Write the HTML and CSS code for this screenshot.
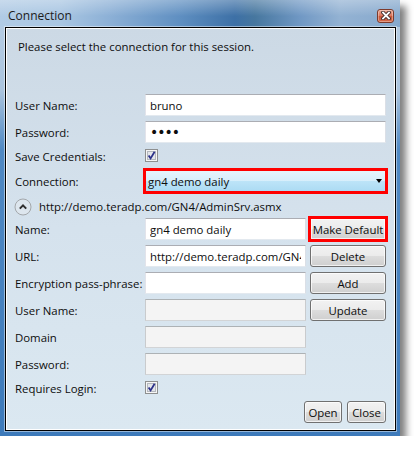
FILE: index.html
```html
<!DOCTYPE html>
<html lang="en">
	<head>
		<meta charset="UTF-8" />
		<meta name="viewport" content="width=device-width, initial-scale=1.0" />
		<title>Connection</title>
		<link rel="stylesheet" href="styles.css">
	</head>
	<body>
		<div class="window">
			<div class="titlebar">
				<span class="title">Connection</span>
				<button class="close-btn" aria-label="Close">
					<svg width="10" height="9" viewBox="0 0 10 9">
						<path d="M2 1.5 L8 7.5 M8 1.5 L2 7.5" stroke="#3b2a28" stroke-width="3.6" stroke-linecap="square" />
						<path d="M2 1.5 L8 7.5 M8 1.5 L2 7.5" stroke="#fff" stroke-width="1.8" stroke-linecap="square" />
					</svg>
				</button>
			</div>

			<div class="client">
				<p class="intro">Please select the connection for this session.</p>

				<div class="form form-top">
					<label for="userName">User Name:</label>
					<input class="field" type="text" id="userName" value="bruno" />

					<label for="password">Password:</label>
					<input class="field field-pass" type="password" id="password" value="abcd" />

					<label>Save Credentials:</label>
					<span class="check">
						<svg width="13" height="13" viewBox="0 0 13 13">
							<rect x="0.5" y="0.5" width="12" height="12" fill="#f6f6f6" stroke="#8e8f8f" />
							<rect x="2.5" y="2.5" width="8" height="8" fill="#e4e6ea" stroke="#b4b8be" />
							<path d="M3.6 6.4 L5.6 9.4 L9.6 2.8" stroke="#2c3189" stroke-width="1.8" fill="none" />
						</svg>
					</span>

					<label>Connection:</label>
					<div class="combo">
						<span>gn4 demo daily</span>
						<span class="combo-arrow"></span>
					</div>
				</div>

				<div class="expander">
					<svg width="18" height="18" viewBox="0 0 18 18">
						<circle cx="9" cy="9" r="8" fill="#dde6ee" stroke="#a3a7ab" />
						<path d="M5.8 10.6 L9 7.4 L12.2 10.6" stroke="#2f2f2f" stroke-width="2" fill="none" />
					</svg>
					<span>http://demo.teradp.com/GN4/AdminSrv.asmx</span>
				</div>

				<div class="form form-bottom">
					<label for="connName">Name:</label>
					<input class="field" type="text" id="connName" value="gn4 demo daily" />
					<button class="btn btn-marked">Make Default</button>

					<label for="connUrl">URL:</label>
					<input class="field" type="text" id="connUrl" value="http://demo.teradp.com/GN4/AdminSrv.asmx" />
					<button class="btn">Delete</button>

					<label for="passPhrase">Encryption pass-phrase:</label>
					<input class="field" type="text" id="passPhrase" value="" />
					<button class="btn">Add</button>

					<label>User Name:</label>
					<input class="field" type="text" disabled />
					<button class="btn">Update</button>

					<label>Domain</label>
					<input class="field" type="text" disabled />
					<span></span>

					<label>Password:</label>
					<input class="field" type="text" disabled />
					<span></span>

					<label>Requires Login:</label>
					<span class="check">
						<svg width="13" height="13" viewBox="0 0 13 13">
							<rect x="0.5" y="0.5" width="12" height="12" fill="#f6f6f6" stroke="#8e8f8f" />
							<rect x="2.5" y="2.5" width="8" height="8" fill="#e4e6ea" stroke="#b4b8be" />
							<path d="M3.6 6.4 L5.6 9.4 L9.6 2.8" stroke="#2c3189" stroke-width="1.8" fill="none" />
						</svg>
					</span>
					<span></span>
				</div>

				<div class="footer">
					<button class="btn btn-open">Open</button>
					<button class="btn btn-close">Close</button>
				</div>
			</div>
		</div>
	</body>
</html>
```

FILE: styles.css
```css
html,
body {
	margin: 0;
	background: #fff;
}

body {
	color: #0d0d0d;
	font-family: 'Segoe UI', 'Open Sans', 'Noto Sans', sans-serif;
	font-size: 11.4px;
}

.window {
	width: 400px;
	height: 436px;
	box-sizing: border-box;
	padding: 0 4px 5px 5px;
	display: flex;
	flex-direction: column;
	background: linear-gradient(180deg, #b9cfe5 0, #abc4dd 90px, #5089c3 150px, #3d7aba 100%);
	box-shadow: 6px 6px 7px rgba(0, 0, 0, 0.5);
}

.titlebar {
	height: 27px;
	box-sizing: border-box;
	margin: 0 -4px 0 -5px;
	padding: 4px 6px 0 8px;
	display: flex;
	align-items: center;
	justify-content: space-between;
	background:
		linear-gradient(180deg, rgba(255, 255, 255, 0.3), rgba(255, 255, 255, 0) 60%),
		linear-gradient(90deg, #b1cbe5 0, #a9c6e2 60px, #8cb0d6 110px, #5f8fc1 180px, #3d70a6 235px, #47779f 255px, #7098c4 300px, #93b2d3 340px, #87a9cd 400px);
}

.title {
	color: #1b1b1b;
	font-size: 12px;
}

.close-btn {
	width: 17px;
	height: 14px;
	padding: 0;
	border: 1px solid #7d3a2c;
	border-radius: 3px;
	display: flex;
	align-items: center;
	justify-content: center;
	background: linear-gradient(180deg, #eaa48f 0%, #d9735a 50%, #c85538 51%, #d66a4a 100%);
	box-shadow: inset 0 0 0 1px rgba(255, 255, 255, 0.35);
}

.client {
	height: 404px;
	box-sizing: border-box;
	border: 1px solid #000;
	padding: 0 9px;
	background: linear-gradient(180deg, #ccd9e5 0, #d5e2ed 50%, #dbe8f1 100%);
	box-shadow: inset 0 0 0 1px #fff, 0 0 0 1px rgba(255, 255, 255, 0.45);
}

.intro {
	margin: 11px 0 0 3px;
	line-height: 16px;
}

.form {
	display: grid;
	row-gap: 5px;
	align-items: center;
}

.form-top {
	margin-top: 39px;
	grid-template-columns: 130px 1fr;
	grid-template-rows: 22px 22px 17px 22px;
}

.form-bottom {
	margin-top: 2px;
	grid-template-columns: 126px 161px 76px;
	column-gap: 4px;
	grid-template-rows: repeat(6, 22px) 17px;
}

label {
	line-height: 17px;
	white-space: nowrap;
}

.check {
	display: flex;
	align-self: start;
	margin-top: 1px;
}

.field {
	height: 22px;
	width: 100%;
	box-sizing: border-box;
	margin: 0;
	padding: 0 4px;
	font-family: inherit;
	font-size: 11.4px;
	color: #0d0d0d;
	background: #fff;
	border: 1px solid;
	border-color: #abadb3 #dbdfe6 #e3e9ef #e2e3ea;
	border-radius: 0;
	outline: none;
}

.field:disabled {
	background: #f4f4f4;
	border-color: #adb2b5 #c9cbcd #d2d4d6 #c9cbcd;
}

.field-pass {
	font-family: 'DejaVu Sans', sans-serif;
	font-size: 14px;
	letter-spacing: -1px;
}

.combo {
	height: 22px;
	box-sizing: border-box;
	padding: 0 3px 0 2px;
	display: flex;
	align-items: center;
	justify-content: space-between;
	border: 1px solid #3c7fb1;
	background: linear-gradient(180deg, #e6f4fc 0%, #d7eefb 50%, #bde4f8 51%, #acdbf3 100%);
	outline: 3px solid #f00;
	outline-offset: -1px;
}

.combo-arrow {
	width: 0;
	height: 0;
	border-top: 4px solid #000;
	border-left: 3.5px solid transparent;
	border-right: 3.5px solid transparent;
}

.expander {
	margin-top: 5px;
	height: 19px;
	display: flex;
	align-items: center;
	gap: 7px;
	margin-left: -1px;
}

.expander svg {
	display: block;
}

.btn {
	height: 22px;
	box-sizing: border-box;
	margin: 0;
	padding: 0;
	font-family: inherit;
	font-size: 11.4px;
	color: #0d0d0d;
	white-space: nowrap;
	border: 1px solid #707070;
	border-radius: 3px;
	background: linear-gradient(180deg, #f2f2f2 0%, #ebebeb 50%, #dddddd 51%, #cfcfcf 100%);
	box-shadow: inset 0 0 0 1px rgba(255, 255, 255, 0.7);
}

.btn-marked {
	border-radius: 0;
	outline: 3px solid #f00;
	outline-offset: -1px;
}

.footer {
	margin-top: 4px;
	display: flex;
	justify-content: flex-end;
	gap: 5px;
}

.btn-open {
	width: 38px;
}

.btn-close {
	width: 39px;
}
```
